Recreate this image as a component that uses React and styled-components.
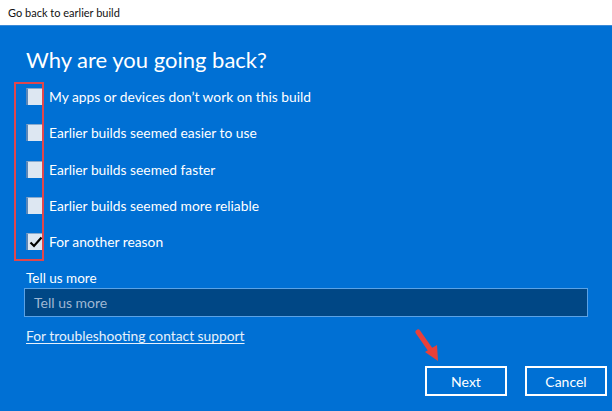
import styled, { createGlobalStyle } from 'styled-components';

const GlobalStyle = createGlobalStyle`
  html, body {
    margin: 0;
    padding: 0;
    width: 612px;
    height: 411px;
    overflow: hidden;
    font-family: 'Lato', 'Open Sans', sans-serif;
  }
`;

const Window = styled.div`
  width: 612px;
  height: 411px;
  display: flex;
  flex-direction: column;
  background: #0070d4;
`;

const TitleBar = styled.div`
  height: 26px;
  flex: none;
  background: #fff;
  border-bottom: 1px solid #3a8ad8;
  box-sizing: border-box;
  display: flex;
  align-items: center;
  padding-left: 8px;
  font-size: 11px;
  color: #111;
`;

const Body = styled.div`
  position: relative;
  flex: 1;
  padding: 19px 24px 0 26px;
  color: #fff;
`;

const Heading = styled.h1`
  margin: 0;
  font-size: 22px;
  font-weight: 400;
  line-height: 30px;
`;

const Options = styled.div`
  display: flex;
  flex-direction: column;
  gap: 19.3px;
  margin-top: 13px;
`;

const Option = styled.label`
  display: flex;
  align-items: center;
  gap: 6px;
  height: 17px;
  font-size: 13.8px;
`;

const Box = styled.span`
  width: 17px;
  height: 17px;
  box-sizing: border-box;
  background: #dde7f2;
  border-left: 2px solid #5b87b8;
  border-top: 1px solid #8aaacd;
  display: flex;
  align-items: center;
  justify-content: center;
`;

const Highlight = styled.div`
  position: absolute;
  left: 14px;
  top: 56px;
  width: 30px;
  height: 179px;
  box-sizing: border-box;
  border: 2px solid #e0474c;
  pointer-events: none;
`;

const FieldLabel = styled.div`
  margin-top: 20px;
  font-size: 13.5px;
`;

const Input = styled.div`
  margin: 2px 0 0 -2px;
  height: 29px;
  box-sizing: border-box;
  background: #004785;
  border: 1px solid #5aa2e6;
  display: flex;
  align-items: center;
  padding-left: 9px;
  font-size: 14px;
  color: #9fb7d3;
`;

const SupportLink = styled.a`
  display: inline-block;
  margin-top: 10px;
  font-size: 13.8px;
  color: #e6f0fb;
  text-decoration: underline;
  text-underline-offset: 2px;
`;

const Actions = styled.div`
  position: absolute;
  right: 5px;
  bottom: 15px;
  display: flex;
  gap: 18px;
`;

const Button = styled.button`
  width: 82px;
  height: 30px;
  background: transparent;
  border: 2px solid #fff;
  color: #fff;
  font-family: inherit;
  font-size: 14px;
`;

const Arrow = styled.svg`
  position: absolute;
  left: 412px;
  top: 302px;
`;

const reasons = [
  ['My apps or devices don\u2019t work on this build', false],
  ['Earlier builds seemed easier to use', false],
  ['Earlier builds seemed faster', false],
  ['Earlier builds seemed more reliable', false],
  ['For another reason', true],
];

export default function App() {
  return (
    <>
      <GlobalStyle />
      <Window>
        <TitleBar>Go back to earlier build</TitleBar>
        <Body>
          <Heading>Why are you going back?</Heading>
          <Options>
            {reasons.map(([text, checked]) => (
              <Option key={text}>
                <Box>
                  {checked && (
                    <svg width="14" height="12" viewBox="0 0 14 12">
                      <path d="M1.5 6.5 L5 10 L12.5 1.5" fill="none" stroke="#000" strokeWidth="2.2" />
                    </svg>
                  )}
                </Box>
                {text}
              </Option>
            ))}
          </Options>
          <Highlight />
          <FieldLabel>Tell us more</FieldLabel>
          <Input>Tell us more</Input>
          <SupportLink>For troubleshooting contact support</SupportLink>
          <Arrow width="32" height="36" viewBox="0 0 32 36">
            <path d="M6 4 L20 24" stroke="#e8403a" strokeWidth="5" strokeLinecap="round" />
            <path d="M13 24 L26 33 L25 17 Z" fill="#e8403a" />
          </Arrow>
          <Actions>
            <Button>Next</Button>
            <Button>Cancel</Button>
          </Actions>
        </Body>
      </Window>
    </>
  );
}
